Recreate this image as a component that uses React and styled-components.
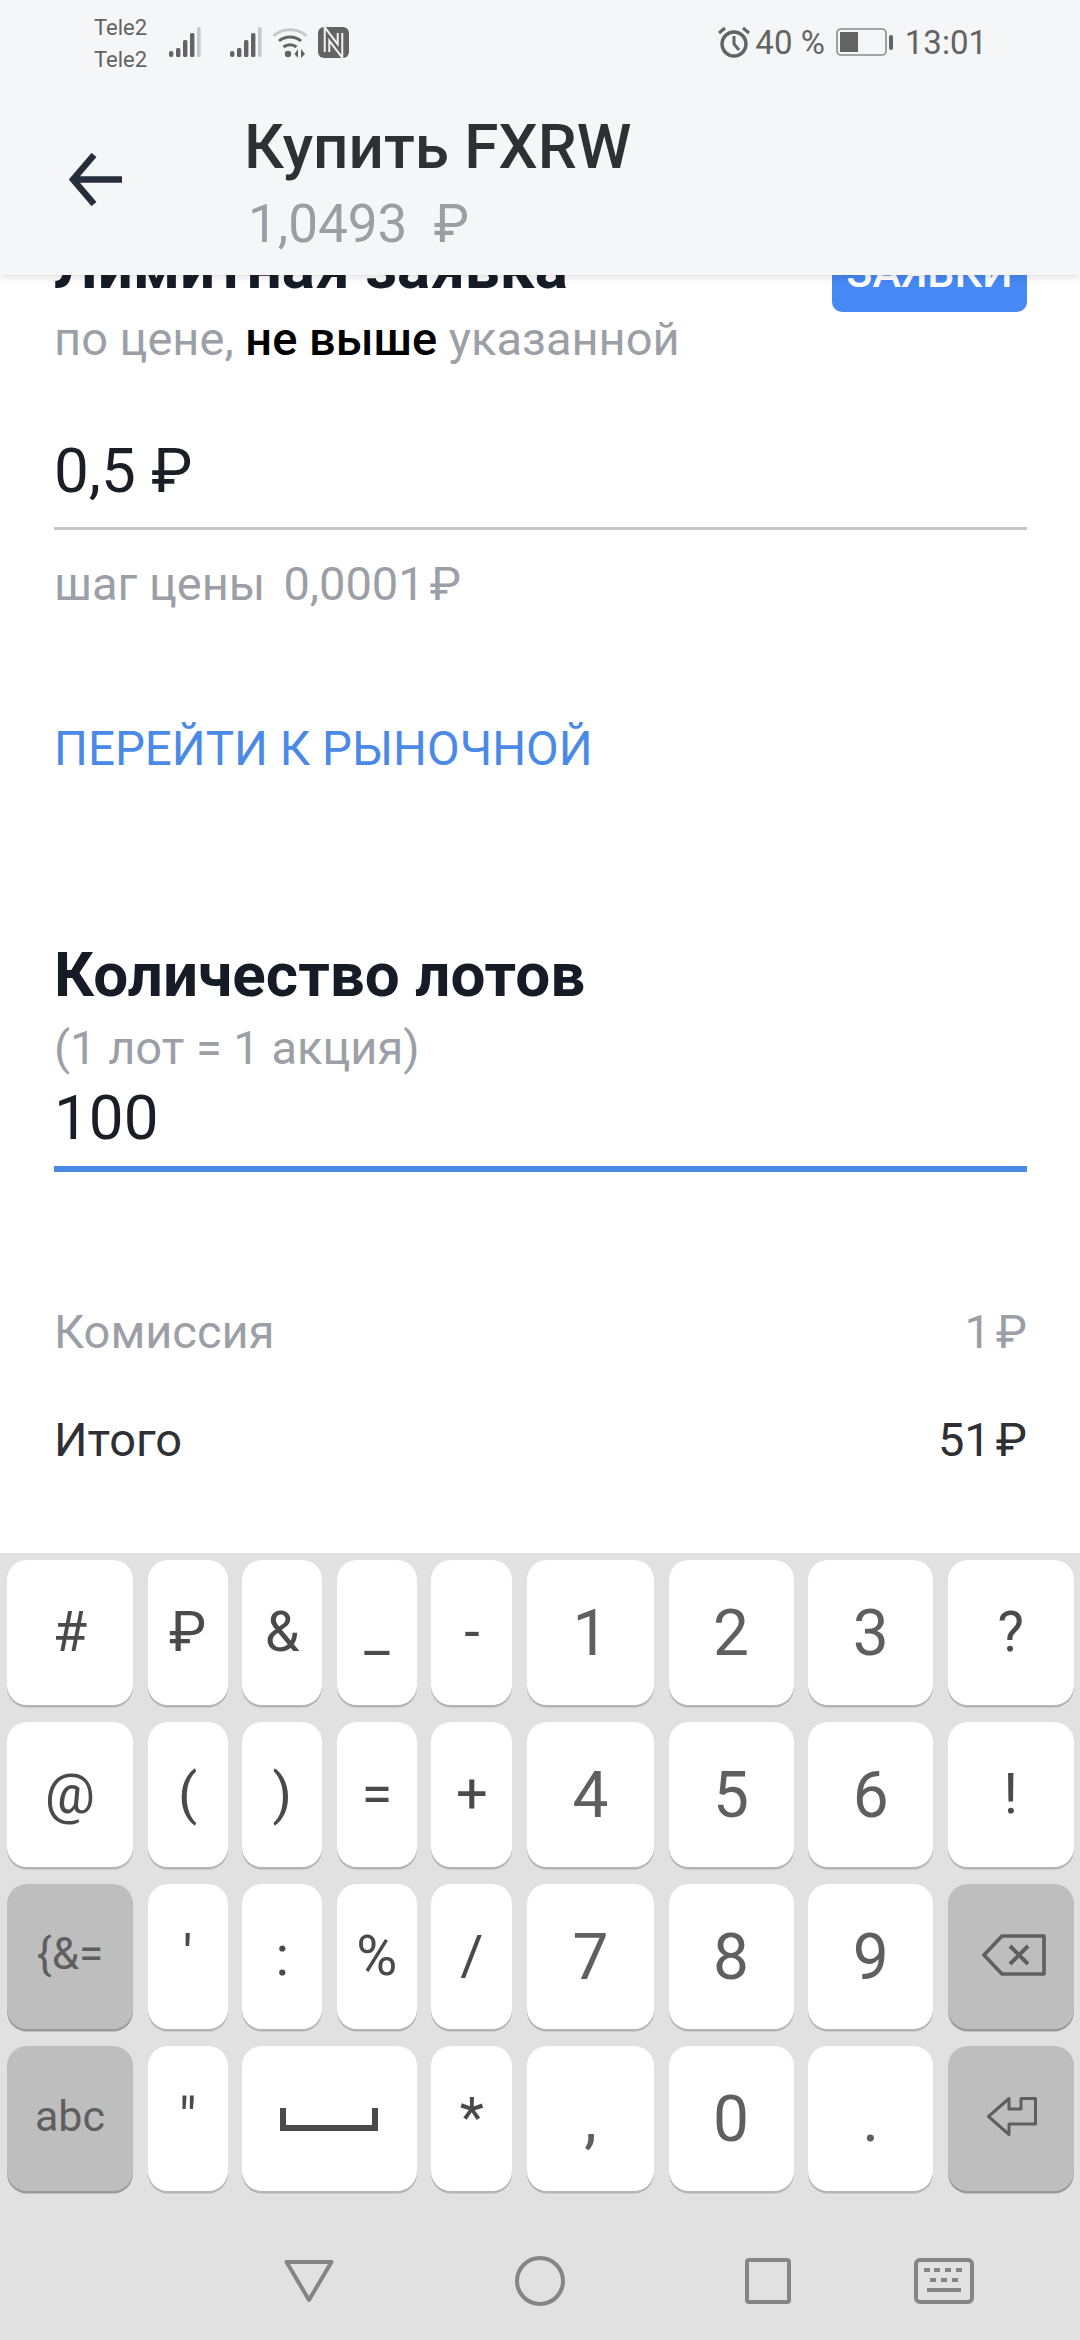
import React from "react";
import styled, { createGlobalStyle } from "styled-components";

const Global = createGlobalStyle`
  html, body { margin: 0; padding: 0; background: #fff; }
  body { font-family: Roboto, "Noto Sans", sans-serif; }
`;

const Page = styled.div`
  width: 1080px;
  height: 2340px;
  display: flex;
  flex-direction: column;
  overflow: hidden;
`;

const Header = styled.header`
  position: relative;
  z-index: 2;
  height: 275px;
  flex: none;
  background: #f5f6f8;
  box-shadow: 0 2px 8px rgba(0, 0, 0, 0.14);
  display: flex;
  flex-direction: column;
`;

const StatusBar = styled.div`
  height: 80px;
  flex: none;
  display: flex;
  justify-content: space-between;
  padding: 12px 93px 0 94px;
  color: #636363;
  box-sizing: border-box;
`;

const StatusLeft = styled.div`
  display: flex;
  align-items: flex-start;
`;

const Carriers = styled.div`
  width: 75px;
  font-size: 22px;
  line-height: 32px;
`;

const StatusRight = styled.div`
  display: flex;
  align-items: center;
  height: 60px;
  font-size: 33px;
`;

const TitleBar = styled.div`
  display: flex;
  align-items: flex-start;
  flex: 1;
  padding-top: 32px;
`;

const BackButton = styled.div`
  width: 244px;
  padding: 41px 0 0 69px;
  box-sizing: border-box;
  display: flex;
`;

const TitleBlock = styled.div`
  display: flex;
  flex-direction: column;
`;

const Title = styled.div`
  font-size: 62px;
  font-weight: 500;
  line-height: 70px;
  color: #2e3033;
`;

const Price = styled.div`
  font-size: 53px;
  line-height: 60px;
  margin-top: 12px;
  padding-left: 4px;
  color: #9b9fa3;
`;

const Content = styled.main`
  flex: 1;
  min-height: 0;
  padding: 0 53px 0 54px;
  margin-top: -42px;
  display: flex;
  flex-direction: column;
`;

const OrderHead = styled.div`
  display: flex;
  justify-content: space-between;
  align-items: flex-start;
`;

const SectionTitle = styled.div`
  font-size: 62px;
  font-weight: 700;
  line-height: 68px;
  color: #161c26;
`;

const OrdersButton = styled.div`
  width: 195px;
  height: 72px;
  margin-top: 7px;
  background: #4689f5;
  border-radius: 10px;
  color: #fff;
  font-size: 43px;
  font-weight: 500;
  line-height: 64px;
  text-align: center;
`;

const Hint = styled.div`
  font-size: 47px;
  line-height: 52px;
  color: #9ca0a6;
  b {
    font-weight: 500;
    color: #000;
  }
`;

const OrderHint = styled(Hint)`
  margin-top: 1px;
`;

const ValueField = styled.div`
  margin-top: 71px;
  height: 94px;
  box-sizing: border-box;
  font-size: 62px;
  line-height: 70px;
  color: #1a1e25;
  border-bottom: 3px solid #c6c7c9;
`;

const StepHint = styled(Hint)`
  margin-top: 28px;
  display: flex;
  gap: 18px;
`;

const Rub = styled.span`
  margin-left: ${(p) => p.$gap || 5}px;
`;

const TextLink = styled.div`
  margin-top: 111px;
  font-size: 47.5px;
  line-height: 56px;
  color: #4a8ae6;
`;

const LotsTitle = styled(SectionTitle)`
  margin-top: 164px;
`;

const LotsHint = styled(Hint)`
  margin-top: 13px;
`;

const LotsField = styled.div`
  margin-top: 9px;
  height: 89px;
  box-sizing: border-box;
  font-size: 62px;
  line-height: 70px;
  color: #1a1e25;
  border-bottom: 6px solid #4a8ae6;
`;

const SummaryRow = styled.div`
  display: flex;
  justify-content: space-between;
  font-size: 47px;
  line-height: 52px;
  color: ${(p) => (p.$muted ? "#9ca0a6" : "#2e3033")};
  margin-top: ${(p) => p.$top}px;
`;

const Keyboard = styled.div`
  flex: none;
  height: 787px;
  background: #e1e1e1;
  box-sizing: border-box;
  padding: 7px 0 0 7px;
  display: flex;
  flex-direction: column;
`;

const KeyRow = styled.div`
  display: grid;
  grid-template-columns: 126px 80px 80px 80px 81px 127px 125px 125px 126px;
  column-gap: 14.6px;
  height: 145px;
  margin-bottom: 17px;
`;

const Key = styled.div`
  grid-column: span ${(p) => p.$span || 1};
  border-radius: 20px;
  background: ${(p) => (p.$dark ? "#bebebe" : "#ffffff")};
  box-shadow: 0 2.5px 0 ${(p) => (p.$dark ? "#9a9a9a" : "#b5b5b5")};
  color: ${(p) => (p.$digit || p.$dark ? "#5f5f5f" : "#4a4a4a")};
  font-size: ${(p) => p.$size || 56}px;
  display: flex;
  justify-content: center;
  padding-top: ${(p) => p.$pad ?? 42}px;
  padding-left: ${(p) => p.$left || 0}px;
  line-height: 60px;
  box-sizing: border-box;
`;

const NavBar = styled.nav`
  flex: 1;
  margin-left: -7px;
  display: grid;
  grid-template-columns: 230px 232px 224px 128px;
  justify-items: center;
  align-items: center;
  padding: 14px 0 0 194px;
  justify-content: start;
`;

const Signal = ({ ml }) => (
  <svg width="32" height="30" viewBox="0 0 32 30" style={{ marginLeft: ml, marginTop: 15 }}>
    <rect x="0" y="24" width="4.4" height="6" rx="2" fill="#636363" />
    <rect x="7" y="21" width="4.4" height="9" rx="1.5" fill="#636363" />
    <rect x="14" y="13" width="4.4" height="17" rx="1.5" fill="#636363" />
    <rect x="21" y="6" width="4.4" height="24" rx="1.5" fill="#636363" />
    <rect x="28" y="0" width="3.6" height="30" rx="1.5" fill="#c9c9c9" />
  </svg>
);

const Wifi = () => (
  <svg width="36" height="31" viewBox="0 0 36 31" style={{ marginLeft: 10, marginTop: 15 }}>
    <path d="M1.5 9 C10 0.5 26 0.5 34.5 9" fill="none" stroke="#c9c9c9" strokeWidth="3" />
    <path d="M7 14 C13 8.5 23 8.5 29 14" fill="none" stroke="#636363" strokeWidth="3" />
    <path d="M11.5 20 C15 17 21 17 24.5 20" fill="none" stroke="#636363" strokeWidth="3" />
    <circle cx="16" cy="27" r="3.2" fill="#636363" />
    <path d="M26 22 V31 L22.5 27 Z M29 31 V22 L33 27 Z" fill="#636363" />
  </svg>
);

const Nfc = () => (
  <svg width="31" height="31" viewBox="0 0 31 31" style={{ marginLeft: 10, marginTop: 15 }}>
    <rect x="0" y="0" width="31" height="31" rx="6" fill="#636363" />
    <path d="M9 25 V7 L22 24 V6" fill="none" stroke="#f5f6f8" strokeWidth="6.5" />
    <path d="M9 28 V7 L22 24 V3" fill="none" stroke="#636363" strokeWidth="2.6" />
  </svg>
);

const Alarm = () => (
  <svg width="32" height="32" viewBox="0 0 32 32" style={{ marginRight: 5 }}>
    <circle cx="16" cy="18" r="12" fill="none" stroke="#636363" strokeWidth="3.4" />
    <path d="M16 10 V18 L21 24" fill="none" stroke="#636363" strokeWidth="3" />
    <path d="M1 7 L7 2 M31 7 L25 2" stroke="#636363" strokeWidth="3" />
  </svg>
);

const Battery = () => (
  <svg width="58" height="28" viewBox="0 0 58 28" style={{ margin: "0 11px" }}>
    <rect x="1" y="1" width="49" height="26" rx="4" fill="none" stroke="#8a8a8a" strokeWidth="1.6" />
    <rect x="4" y="4" width="18" height="20" fill="#636363" />
    <rect x="53" y="7" width="4" height="15" rx="2" fill="#636363" />
  </svg>
);

const BackArrow = () => (
  <svg width="53" height="53" viewBox="0 0 53 53">
    <path d="M25 2 L4 26.5 L25 51 M4 26.5 H53" fill="none" stroke="#262d3b" strokeWidth="6.5" />
  </svg>
);

const Backspace = () => (
  <svg width="64" height="42" viewBox="0 0 64 42">
    <path d="M2 21 L20 2 H62 V40 H20 Z" fill="none" stroke="#5f5f5f" strokeWidth="3.6" strokeLinejoin="round" />
    <path d="M28 12 L46 30 M46 12 L28 30" stroke="#5f5f5f" strokeWidth="4" />
  </svg>
);

const Enter = () => (
  <svg width="50" height="39" viewBox="0 0 50 39">
    <path d="M1.5 19.5 L22 1.5 V12 H34 V1.5 H48.5 V27 H22 V37.5 Z" fill="none" stroke="#5f5f5f" strokeWidth="3" strokeLinejoin="round" />
  </svg>
);

const SpaceBar = () => (
  <svg width="98" height="23" viewBox="0 0 98 23">
    <path d="M3 0 V20 H95 V0" fill="none" stroke="#4a4a4a" strokeWidth="6" />
  </svg>
);

const NavBack = () => (
  <svg width="50" height="44" viewBox="0 0 50 44">
    <path d="M2.5 3 H47.5 L25 41 Z" fill="none" stroke="#858585" strokeWidth="4" strokeLinejoin="round" />
  </svg>
);

const NavHome = () => (
  <svg width="50" height="50" viewBox="0 0 50 50">
    <circle cx="25" cy="25" r="23" fill="none" stroke="#858585" strokeWidth="4" />
  </svg>
);

const NavRecent = () => (
  <svg width="46" height="46" viewBox="0 0 46 46">
    <rect x="2" y="2" width="42" height="42" rx="2" fill="none" stroke="#858585" strokeWidth="4" />
  </svg>
);

const NavKeyboard = () => (
  <svg width="60" height="46" viewBox="0 0 60 46">
    <rect x="2" y="2" width="56" height="42" rx="4" fill="none" stroke="#858585" strokeWidth="4" />
    <path d="M10 12 H16 M20 12 H26 M31 12 H37 M42 12 H48 M16 22 H22 M27 22 H33 M38 22 H44" stroke="#858585" strokeWidth="4" />
    <path d="M13 32 H47" stroke="#858585" strokeWidth="4" />
  </svg>
);

const digit = (t) => ({ t, $digit: true, $size: 64, $pad: 44 });

const rows = [
  [
    { t: "#" }, { t: "₽" }, { t: "&" }, { t: "_" }, { t: "-" },
    digit("1"), digit("2"), digit("3"), { t: "?" },
  ],
  [
    { t: "@" }, { t: "(" }, { t: ")" }, { t: "=" }, { t: "+" },
    digit("4"), digit("5"), digit("6"), { t: "!" },
  ],
  [
    { t: "{&=", $dark: true, $size: 44, $pad: 40 }, { t: "'" }, { t: ":" }, { t: "%" }, { t: "/" },
    digit("7"), digit("8"), digit("9"),
    { icon: <Backspace />, $dark: true, $pad: 50, $left: 6 },
  ],
  [
    { t: "abc", $dark: true, $size: 43, $pad: 40 }, { t: '"' }, { icon: <SpaceBar />, $span: 2, $pad: 62 }, { t: "*" },
    digit(","), digit("0"), digit("."),
    { icon: <Enter />, $dark: true, $pad: 51, $left: 2 },
  ],
];

export default function App() {
  return (
    <Page>
      <Global />
      <Header>
        <StatusBar>
          <StatusLeft>
            <Carriers>
              Tele2
              <br />
              Tele2
            </Carriers>
            <Signal ml={0} />
            <Signal ml={29} />
            <Wifi />
            <Nfc />
          </StatusLeft>
          <StatusRight>
            <Alarm />
            40 %
            <Battery />
            13:01
          </StatusRight>
        </StatusBar>
        <TitleBar>
          <BackButton>
            <BackArrow />
          </BackButton>
          <TitleBlock>
            <Title>Купить FXRW</Title>
            <Price>1,0493 &nbsp;₽</Price>
          </TitleBlock>
        </TitleBar>
      </Header>
      <Content>
        <OrderHead>
          <SectionTitle>Лимитная заявка</SectionTitle>
          <OrdersButton>ЗАЯВКИ</OrdersButton>
        </OrderHead>
        <OrderHint>
          по цене, <b>не выше</b> указанной
        </OrderHint>
        <ValueField>0,5 ₽</ValueField>
        <StepHint>
          <span>шаг цены</span>
          <span>
            0,0001<Rub>₽</Rub>
          </span>
        </StepHint>
        <TextLink>ПЕРЕЙТИ К РЫНОЧНОЙ</TextLink>
        <LotsTitle>Количество лотов</LotsTitle>
        <LotsHint>(1 лот = 1 акция)</LotsHint>
        <LotsField>100</LotsField>
        <SummaryRow $muted $top={134}>
          <span>Комиссия</span>
          <span>
            1<Rub>₽</Rub>
          </span>
        </SummaryRow>
        <SummaryRow $top={56}>
          <span>Итого</span>
          <span>
            51<Rub>₽</Rub>
          </span>
        </SummaryRow>
      </Content>
      <Keyboard>
        {rows.map((row, i) => (
          <KeyRow key={i}>
            {row.map(({ t, icon, ...rest }, j) => (
              <Key key={j} {...rest}>
                {icon || t}
              </Key>
            ))}
          </KeyRow>
        ))}
        <NavBar>
          <NavBack />
          <NavHome />
          <NavRecent />
          <NavKeyboard />
        </NavBar>
      </Keyboard>
    </Page>
  );
}
